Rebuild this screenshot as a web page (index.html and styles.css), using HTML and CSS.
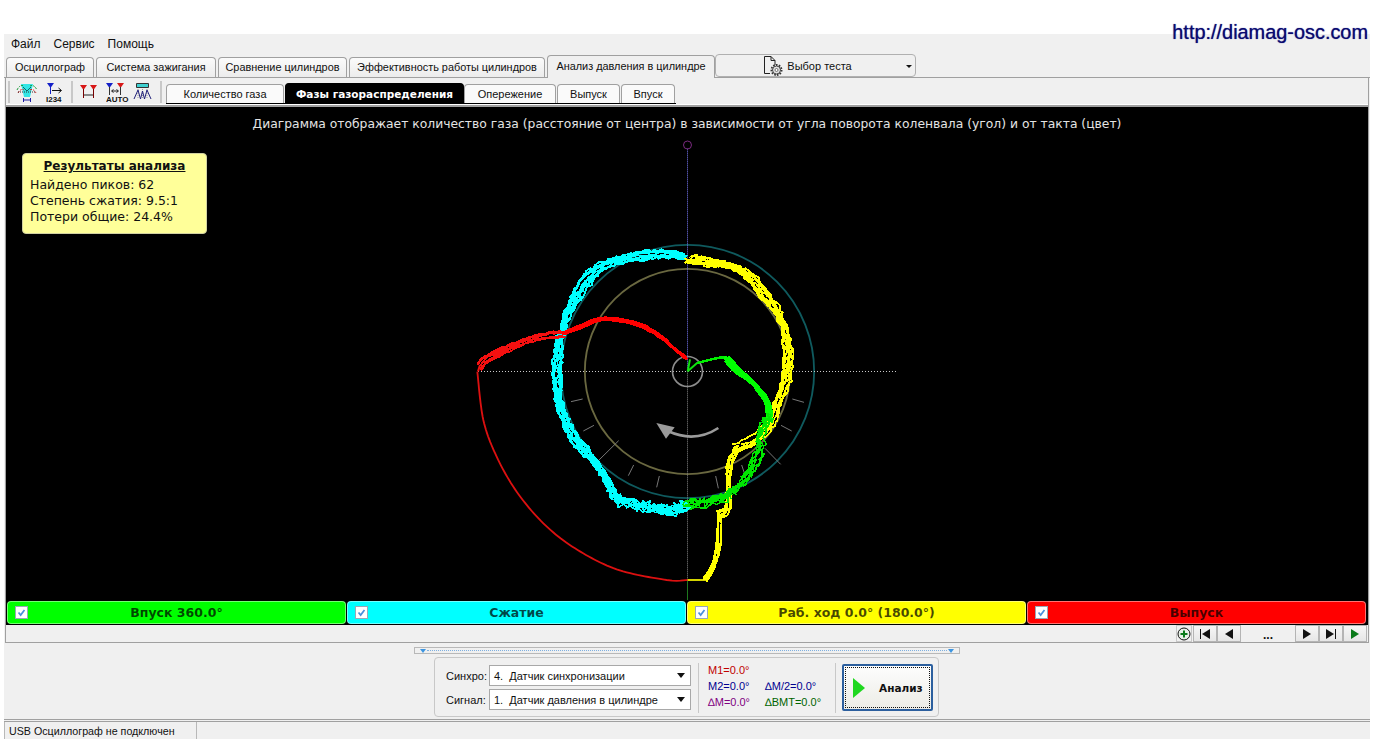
FILE: index.html
```html
<!DOCTYPE html>
<html lang="ru">
  <head>
    <meta charset="UTF-8" />
    <meta name="viewport" content="width=device-width, initial-scale=1.0" />
    <title>Анализ давления в цилиндре</title>
    <link rel="stylesheet" href="styles.css">
  </head>

  <body>
    <svg class="defs" width="0" height="0" aria-hidden="true">
      <symbol id="tick" viewBox="0 0 13 13">
        <path d="M3 6.5 L5.5 9.5 L10 3.5" fill="none" stroke="#4a8fdc" stroke-width="2" />
      </symbol>
    </svg>

    <header class="site-bar">
      <span class="site-url">http://diamag-osc.com</span>
    </header>

    <div class="app">
      <nav class="menu">
        <span>Файл</span>
        <span>Сервис</span>
        <span>Помощь</span>
      </nav>

      <div class="tabs">
        <div class="tab">Осциллограф</div>
        <div class="tab">Система зажигания</div>
        <div class="tab">Сравнение цилиндров</div>
        <div class="tab">Эффективность работы цилиндров</div>
        <div class="tab tab-active">Анализ давления в цилиндре</div>
        <div class="test-picker">
          <svg class="doc-icon" width="24" height="22" viewBox="0 0 24 22">
            <path d="M1.5 1.5 H8 L12 5.5 V10 M8 1.5 V5.5 H12 M1.5 1.5 V18.5 H7" fill="none" stroke="#222" />
            <circle cx="13.5" cy="15" r="5" fill="none" stroke="#333" stroke-width="2" stroke-dasharray="1.6 1.2" />
            <circle cx="13.5" cy="15" r="4" fill="#e2e2e2" stroke="#444" />
            <circle cx="13.5" cy="15" r="1.5" fill="#fff" stroke="#444" stroke-width=".7" />
          </svg>
          <span>Выбор теста</span>
          <i class="caret caret-small"></i>
        </div>
      </div>

      <div class="workspace">
        <div class="toolbar">
          <i class="tool-sep"></i>
          <svg class="tool" width="22" height="22" viewBox="0 0 22 22">
            <path d="M5 3 H17 L14 16 H8 Z" fill="#33e6e6" />
            <path d="M1 9 Q4 3 8 5 M14 5 Q18 3 21 9" fill="none" stroke="#1a9a3a" stroke-dasharray="2 1" />
            <path d="M2 12 Q5 7 8 9 M14 9 Q17 7 20 12" fill="none" stroke="#d02020" stroke-dasharray="2 1" />
            <path d="M2 11 H20" stroke="#333" stroke-dasharray="1 1" />
            <path d="M7 6 L11 10 L15 6" fill="none" stroke="#0a6a6a" />
            <path d="M7.5 17 V21 M14.5 17 V21 M8 19 H14" stroke="#1c1ca0" />
          </svg>
          <svg class="tool tool-b" width="20" height="22" viewBox="0 0 20 22">
            <path d="M3 2 H10 L6.5 7 Z" fill="#1420c8" />
            <path d="M6.5 6 V13" stroke="#1420c8" />
            <path d="M8 9.5 H17 M14.5 7 L17.5 9.5 L14.5 12" fill="none" stroke="#111" />
            <text x="2" y="21" class="tool-label">I234</text>
          </svg>
          <i class="tool-sep tool-sep-wide"></i>
          <svg class="tool" width="20" height="22" viewBox="0 0 20 22">
            <path d="M1 4 H8 L4.5 9 Z M11 4 H18 L14.5 9 Z" fill="#d81818" />
            <path d="M4.5 8 V17 M14.5 8 V17" stroke="#700" />
            <path d="M5 14 H14" stroke="#222" />
          </svg>
          <svg class="tool tool-c tool-wide" width="24" height="22" viewBox="0 0 24 22">
            <path d="M0 2 H7 L3.5 7 Z" fill="#1420c8" />
            <path d="M11 2 H18 L14.5 7 Z" fill="#d81818" />
            <path d="M3.5 6 V14 M14.5 6 V14" stroke="#333" />
            <path d="M6 10 H12 M7.5 8.5 L5.5 10 L7.5 11.5 M10.5 8.5 L12.5 10 L10.5 11.5" fill="none" stroke="#222" />
            <text x="0" y="21" class="tool-label">AUTO</text>
          </svg>
          <svg class="tool tool-c" width="20" height="22" viewBox="0 0 20 22">
            <path d="M3.5 2.5 H15.5 V6.5 H3.5 Z" fill="#3fd0d0" stroke="#333" />
            <path d="M5 8 V17 M9.5 8 V17 M14 8 V17" stroke="#999" stroke-dasharray="1 1" />
            <path d="M1 18 L5 9 L7.5 18 L9.5 10 L11.5 18 L14 9 L18 18" fill="none" stroke="#20207a" />
          </svg>
          <i class="tool-sep tool-sep-wide"></i>
          <div class="subtabs">
            <div class="subtab">Количество газа</div>
            <div class="subtab subtab-active">Фазы газораспределения</div>
            <div class="subtab">Опережение</div>
            <div class="subtab">Выпуск</div>
            <div class="subtab">Впуск</div>
          </div>
        </div>

        <section class="plot">
          <h2 class="plot-title">Диаграмма отображает количество газа (расстояние от центра) в зависимости от угла поворота коленвала (угол) и от такта (цвет)</h2>
          <svg class="plot-canvas" id="plotCanvas" viewBox="0 0 1363 493"></svg>
          <div class="results">
            <h3>Результаты анализа</h3>
            <p>Найдено пиков: 62</p>
            <p>Степень сжатия: 9.5:1</p>
            <p>Потери общие: 24.4%</p>
          </div>
        </section>

        <div class="strokes">
          <label class="stroke stroke-intake"><svg class="check"><use href="#tick" /></svg><span>Впуск 360.0°</span></label>
          <label class="stroke stroke-compress"><svg class="check"><use href="#tick" /></svg><span>Сжатие</span></label>
          <label class="stroke stroke-power"><svg class="check"><use href="#tick" /></svg><span>Раб. ход 0.0° (180.0°)</span></label>
          <label class="stroke stroke-exhaust"><svg class="check"><use href="#tick" /></svg><span>Выпуск</span></label>
        </div>

        <div class="pager">
          <button class="page-zoom" type="button">
            <svg width="14" height="14" viewBox="0 0 14 14">
              <circle cx="7" cy="7" r="6" fill="#e8f0e8" stroke="#111" />
              <path d="M7 3.5 V10.5 M3.5 7 H10.5" stroke="#0a7a1a" stroke-width="2" />
            </svg>
          </button>
          <button class="page-btn" type="button">
            <svg width="12" height="10" viewBox="0 0 12 10"><path d="M1.5 0 V10" stroke="#111" /><path d="M11 0 V10 L3 5 Z" fill="#111" /></svg>
          </button>
          <button class="page-btn" type="button">
            <svg width="10" height="10" viewBox="0 0 10 10"><path d="M9 0 V10 L1 5 Z" fill="#111" /></svg>
          </button>
          <div class="page-label">...</div>
          <button class="page-btn" type="button">
            <svg width="10" height="10" viewBox="0 0 10 10"><path d="M1 0 V10 L9 5 Z" fill="#111" /></svg>
          </button>
          <button class="page-btn" type="button">
            <svg width="12" height="10" viewBox="0 0 12 10"><path d="M1 0 V10 L9 5 Z" fill="#111" /><path d="M10.5 0 V10" stroke="#111" /></svg>
          </button>
          <button class="page-btn" type="button">
            <svg width="10" height="10" viewBox="0 0 10 10"><path d="M1 0 V10 L9 5 Z" fill="#0a7a1a" /></svg>
          </button>
        </div>
      </div>

      <div class="controls">
        <div class="splitter"><i></i><i></i></div>
        <div class="control-box">
          <div class="combos">
            <div class="combo-row">
              <span class="combo-label">Синхро:</span>
              <div class="combo"><span>4.&nbsp; Датчик синхронизации</span><i class="caret"></i></div>
            </div>
            <div class="combo-row">
              <span class="combo-label">Сигнал:</span>
              <div class="combo"><span>1.&nbsp; Датчик давления в цилиндре</span><i class="caret"></i></div>
            </div>
          </div>
          <i class="box-sep"></i>
          <div class="marks">
            <span class="mark-red">M1=0.0°</span>
            <span></span>
            <span class="mark-blue">M2=0.0°</span>
            <span class="mark-blue">∆M/2=0.0°</span>
            <span class="mark-purple">∆M=0.0°</span>
            <span class="mark-green">∆BMT=0.0°</span>
          </div>
          <i class="box-sep"></i>
          <button class="run" type="button">
            <svg width="12" height="20" viewBox="0 0 12 20"><path d="M0 0 L12 10 L0 20 Z" fill="#1fd81f" /></svg>
            <span>Анализ</span>
          </button>
        </div>
      </div>

      <footer class="status">
        <div class="status-cell status-main">USB Осциллограф не подключен</div>
        <div class="status-cell status-rest"></div>
      </footer>
    </div>

    <script src="chart.js"></script>
  </body>
</html>
```

FILE: styles.css
```css
* {
  padding: 0;
  margin: 0;
  box-sizing: border-box;
}

body {
  background-color: #ffffff;
  font-family: "Liberation Sans", Arial, sans-serif;
  font-size: 11px;
  color: #111111;
  overflow: hidden;
}

.defs {
  position: absolute;
}

.site-bar {
  height: 34px;
  display: flex;
  justify-content: flex-end;
  padding: 20px 14px 0 0;
}

.site-url {
  font-size: 19.9px;
  line-height: 24px;
  color: #0a0a6e;
  text-shadow: 0 0 1px #3a3a9e;
}

.app {
  width: 1366px;
  height: 705px;
  margin-left: 4px;
  display: flex;
  flex-direction: column;
  background-color: #f0f0f0;
}

/* menu + main tabs */
.menu {
  height: 20px;
  display: flex;
  gap: 13px;
  align-items: center;
  padding: 0 0 0 7px;
  font-size: 12px;
}

.tabs {
  height: 24px;
  display: grid;
  grid-template-columns: 90px 122px 131px 198px 168px 201px;
  padding-left: 2px;
  border-bottom: 1px solid #a0a0a0;
  align-items: end;
}

.tab {
  height: 20px;
  margin-right: 2px;
  padding-bottom: 1px;
  display: flex;
  align-items: center;
  justify-content: center;
  background: linear-gradient(#fbfbfb, #ececec);
  border: 1px solid #a0a0a0;
  border-bottom: none;
  border-radius: 4px 4px 0 0;
  font-size: 10.9px;
}

.tab-active {
  height: 23px;
  margin-right: 0;
  margin-bottom: -1px;
  padding-bottom: 2px;
  background: #f0f0f0;
}

.test-picker {
  height: 23px;
  display: flex;
  align-items: center;
  justify-content: center;
  position: relative;
  background: #f0f0f0;
  border: 1px solid #b0b0b0;
  border-radius: 4px;
}

.doc-icon {
  margin-left: -16px;
}

.caret {
  width: 0;
  height: 0;
  border-left: 4px solid transparent;
  border-right: 4px solid transparent;
  border-top: 5px solid #111111;
}

.caret-small {
  position: absolute;
  right: 3px;
  top: 10px;
  border-width: 3px 3px 0;
}

/* workspace */
.workspace {
  flex: 1;
  margin: 0 1px;
  display: flex;
  flex-direction: column;
  border-left: 1px solid #a0a0a0;
  border-right: 1px solid #a0a0a0;
  border-bottom: 1px solid #a0a0a0;
}

.toolbar {
  height: 29px;
  flex: none;
  display: flex;
  align-items: flex-start;
  padding: 3px 0 0 2px;
  border-bottom: 2px solid #a0a0a0;
  box-shadow: inset 0 -1px 0 #ffffff;
}

.tool-label {
  font-family: "Liberation Sans", Arial, sans-serif;
  font-size: 8px;
  font-weight: 700;
  fill: #111111;
}

.tool-sep {
  width: 2px;
  height: 22px;
  margin-right: 6px;
  background-color: #c8c8c8;
}

.tool-sep-wide {
  margin: 0 6px 0 7px;
}

.tool-sep-wide:last-of-type {
  margin-right: 4px;
}

.tool-b {
  margin-left: 6px;
}

.tool-c {
  margin-left: 7px;
}

.tool-wide {
  margin-right: -4px;
}

.subtabs {
  display: flex;
  align-items: flex-end;
  height: 23px;
  border-bottom: 1px solid #000000;
}

.subtab {
  height: 19px;
  display: flex;
  align-items: center;
  justify-content: center;
  background: #fafafa;
  border: 1px solid #a0a0a0;
  border-bottom: none;
  border-radius: 4px 4px 0 0;
  margin-right: 1px;
}

.subtab:nth-child(1) { width: 118px; }
.subtab:nth-child(2) { width: 179px; }
.subtab:nth-child(3) { width: 92px; }
.subtab:nth-child(4) { width: 63px; }
.subtab:nth-child(5) { width: 54px; }

.subtab-active {
  height: 20px;
  margin-right: 0;
  background: #000000;
  border-color: #000000;
  color: #ffffff;
  font-family: "DejaVu Sans", Verdana, sans-serif;
  font-weight: 700;
  font-size: 10.5px;
  white-space: nowrap;
}

/* black chart area */
.plot {
  height: 493px;
  flex: none;
  position: relative;
  background-color: #000000;
}

.plot-title {
  padding-top: 9px;
  text-align: center;
  font-family: "DejaVu Sans", Verdana, sans-serif;
  font-size: 12.33px;
  font-weight: 400;
  line-height: 16px;
  color: #e4e4e4;
}

.plot-canvas {
  position: absolute;
  left: 0;
  top: 0;
  width: 1363px;
  height: 493px;
}

.results {
  position: absolute;
  left: 16px;
  top: 46px;
  width: 185px;
  height: 81px;
  padding: 4px 7px;
  background-color: #ffff99;
  border: 1px solid #d0d0a0;
  border-radius: 4px;
  color: #111111;
  font-family: "DejaVu Sans", Verdana, sans-serif;
  font-size: 12.5px;
  line-height: 16px;
}

.results h3 {
  margin-bottom: 3px;
  text-align: center;
  font-size: 12px;
  font-weight: 700;
  text-decoration: underline;
}

.strokes {
  height: 25px;
  flex: none;
  display: grid;
  grid-template-columns: repeat(4, 339px);
  gap: 1px;
  padding: 1px 1px;
  background-color: #000000;
}

.stroke {
  position: relative;
  display: flex;
  align-items: center;
  justify-content: center;
  border: 1px solid rgba(255, 255, 255, 0.45);
  border-radius: 4px;
  font-family: "DejaVu Sans", Verdana, sans-serif;
  font-weight: 700;
  font-size: 12.5px;
  color: rgba(0, 0, 0, 0.72);
}

.stroke-intake { background-color: #00ff00; }
.stroke-compress { background-color: #00ffff; }
.stroke-power { background-color: #ffff00; }
.stroke-exhaust { background-color: #ff0000; }

.check {
  position: absolute;
  left: 7px;
  top: 4px;
  width: 13px;
  height: 13px;
  background-color: #ffffff;
  border: 1px solid #9aa8b8;
}

.pager {
  flex: 1;
  display: flex;
  justify-content: flex-end;
  padding-right: 1px;
}

.pager button {
  display: flex;
  align-items: center;
  justify-content: center;
  font: inherit;
}

.page-zoom {
  width: 16px;
  background: #f0f0f0;
  border: 1px solid #c8c8c8;
  margin-right: 1px;
}

.page-btn {
  width: 24px;
  background: linear-gradient(#f6f6f6, #e6e6e6);
  border: 1px solid #b4b4b4;
}

.page-label {
  width: 54px;
  padding-top: 3px;
  text-align: center;
  font-weight: 700;
  font-size: 12px;
}

/* bottom controls */
.controls {
  height: 79px;
  flex: none;
  display: flex;
  flex-direction: column;
  align-items: center;
  border-bottom: 3px double #a0a0a0;
}

.splitter {
  width: 546px;
  height: 7px;
  margin-top: 4px;
  display: flex;
  justify-content: space-between;
  padding: 1px 5px 0;
  border: 1px solid #b8b8b8;
  position: relative;
}

.splitter::after {
  content: "";
  position: absolute;
  left: 12px;
  right: 12px;
  top: 2px;
  border-top: 1px dotted #7fb0e0;
}

.splitter i {
  width: 0;
  height: 0;
  border-left: 3px solid transparent;
  border-right: 3px solid transparent;
  border-top: 4px solid #3d95e0;
}

.control-box {
  width: 505px;
  height: 60px;
  margin: 3px 1px 0 0;
  display: flex;
  align-items: center;
  padding: 1px 5px 0 11px;
  border: 1px solid #c8c8c8;
  border-radius: 4px;
}

.combos {
  display: flex;
  flex-direction: column;
  gap: 3px;
}

.combo-row {
  display: flex;
  align-items: center;
}

.combo-label {
  width: 43px;
}

.combo {
  width: 202px;
  height: 21px;
  display: flex;
  align-items: center;
  justify-content: space-between;
  padding: 0 5px 0 4px;
  background-color: #ffffff;
  border: 1px solid #a8a8a8;
  font-size: 11px;
}

.box-sep {
  width: 1px;
  height: 50px;
  background-color: #c8c8c8;
}

.combos + .box-sep {
  margin: 0 9px 0 7px;
}

.marks {
  width: 127px;
  margin-top: -4px;
  display: grid;
  grid-template-columns: 57px 1fr;
  grid-auto-rows: 16px;
  align-items: center;
  font-size: 11px;
}

.mark-red { color: #c00000; }
.mark-blue { color: #000090; }
.mark-purple { color: #800080; }
.mark-green { color: #006400; }

.marks + .box-sep {
  margin-right: 6px;
}

.run {
  width: 91px;
  height: 47px;
  display: flex;
  align-items: center;
  padding-left: 9px;
  gap: 14px;
  background: linear-gradient(#fdfdfd, #ecece6);
  border: 2px solid #2c5f9e;
  border-radius: 2px;
  outline: 1px dotted #111111;
  outline-offset: -4px;
  font-family: "DejaVu Sans", Verdana, sans-serif;
  font-weight: 700;
  font-size: 10.5px;
  color: #111111;
}

.status {
  flex: 1;
  display: flex;
  gap: 3px;
}

.status-cell {
  display: flex;
  align-items: center;
  padding-left: 4px;
  background-color: #f0f0f0;
  border-left: 1px solid #b8b8b8;
  font-size: 10.7px;
}

.status-main {
  width: 189px;
  white-space: nowrap;
}

.status-rest {
  flex: 1;
}
```

FILE: chart.js
```js
// Polar plot of the pressure trace. All points are in plot units (1 unit = 1/3 px),
// group below moves them onto the black area.
const SVG_NS = "http://www.w3.org/2000/svg";
const canvas = document.getElementById("plotCanvas");
const layer = document.createElementNS(SVG_NS, "g");
layer.setAttribute("transform", "translate(454 123) scale(0.33333)");
canvas.appendChild(layer);

let seed = 4711;
function rnd() {
  seed = (seed * 1664525 + 1013904223) % 4294967296;
  return seed / 4294967296 - 0.5;
}

function add(tag, attrs) {
  const el = document.createElementNS(SVG_NS, tag);
  Object.keys(attrs).forEach((key) => el.setAttribute(key, attrs[key]));
  layer.appendChild(el);
  return el;
}

function line(x1, y1, x2, y2, stroke, width, dash) {
  const el = add("line", { x1, y1, x2, y2, stroke, "stroke-width": width || 3 });
  if (dash) el.setAttribute("stroke-dasharray", dash);
}

// Catmull-Rom through the control points
function smooth(pts, step) {
  const out = [];
  for (let i = 0; i < pts.length - 1; i++) {
    const p0 = pts[Math.max(i - 1, 0)];
    const p1 = pts[i];
    const p2 = pts[i + 1];
    const p3 = pts[Math.min(i + 2, pts.length - 1)];
    const n = Math.max(2, Math.round(Math.hypot(p2[0] - p1[0], p2[1] - p1[1]) / step));
    for (let j = 0; j < n; j++) {
      const t = j / n;
      const f = (a, b, c, d) =>
        0.5 * (2 * b + (c - a) * t + (2 * a - 5 * b + 4 * c - d) * t * t + (3 * b - a - 3 * c + d) * t * t * t);
      out.push([f(p0[0], p1[0], p2[0], p3[0]), f(p0[1], p1[1], p2[1], p3[1])]);
    }
  }
  out.push(pts[pts.length - 1]);
  return out;
}

// each pass is one engine cycle: a slow wander plus sampling noise
function trace(pts, color, opts) {
  const step = opts.step || 10;
  const base = smooth(pts, step);
  for (let pass = 0; pass < opts.passes; pass++) {
    const phaseX = rnd() * 12;
    const phaseY = rnd() * 12;
    const freq = 0.006 + (rnd() + 0.5) * 0.012;
    const d = base
      .map((p, i) => {
        const s = i * step * freq;
        const x = p[0] + (opts.spread / 2) * Math.sin(s + phaseX) + rnd() * opts.jitter;
        const y = p[1] + (opts.spread / 2) * Math.sin(s + phaseY) + rnd() * opts.jitter;
        return x.toFixed(1) + " " + y.toFixed(1);
      })
      .join(" L");
    add("path", {
      d: "M" + d,
      fill: "none",
      stroke: color,
      "stroke-width": opts.width,
      "stroke-linejoin": "round",
      "shape-rendering": opts.smooth ? "auto" : "crispEdges",
    });
  }
}

// reference circles and cross
add("circle", { cx: 682.5, cy: 424.5, r: 380, fill: "none", stroke: "#0f5a5e", "stroke-width": 5.5 });
add("circle", { cx: 682.5, cy: 424.5, r: 308, fill: "none", stroke: "#6a6840", "stroke-width": 5.5 });

[
  [333, 515, 368, 507], [370, 603, 402, 586], [412, 695, 476, 632], [505, 737, 521, 705], [590, 772, 598, 738],
  [775, 775, 767, 738], [855, 735, 845, 705], [962, 703, 915, 655], [995, 603, 963, 586], [1032, 517, 997, 507],
].forEach((t) => line(t[0], t[1], t[2], t[3], "#777777", 3));

line(682.5, -244, 682.5, 424, "#7c7cff", 3, "3 3");
line(682.5, 424, 682.5, 1052, "#8a8a8a", 3, "3 3");
line(682.5, 1052, 682.5, 1110, "#1f7a1f", 3);
line(54, 424.5, 1308, 424.5, "#d0d0d0", 3, "3 6");
add("circle", { cx: 682.5, cy: -255, r: 12, fill: "none", stroke: "#7a2a80", "stroke-width": 3 });
add("circle", { cx: 682.5, cy: 424.5, r: 45, fill: "none", stroke: "#8c8c8c", "stroke-width": 5 });

// turn direction arrow
add("path", { d: "M775 594 Q705 640 625 604", fill: "none", stroke: "#9a9a9a", "stroke-width": 8 });
add("path", { d: "M589 579 L644 592 L618 626 Z", fill: "#9a9a9a" });

// exhaust
trace([[683, 1050], [620, 1050], [470, 1018], [345, 955], [250, 880], [170, 785], [110, 680], [70, 570], [52, 425]],
  "#dc1010", { passes: 1, jitter: 0, spread: 0, width: 5.5, smooth: true });

// compression
trace([[683, 84], [620, 72], [540, 78], [450, 98], [400, 130], [360, 180], [322, 260], [298, 340], [292, 430], [300, 510], [332, 600], [380, 670], [422, 730], [470, 812]],
  "#00ffff", { passes: 9, jitter: 11, spread: 22, width: 5.5 });
trace([[470, 812], [540, 826], [620, 840], [683, 825]], "#00ffff", { passes: 8, jitter: 26, spread: 16, width: 5, step: 9 });

// power stroke
trace([[683, 84], [760, 100], [850, 128], [900, 180], [950, 250], [980, 340], [982, 430], [960, 510], [925, 590], [880, 630], [830, 652]],
  "#ffff00", { passes: 9, jitter: 10, spread: 24, width: 5.5 });
trace([[830, 652], [808, 700], [808, 790], [800, 840], [778, 852]], "#ffff00", { passes: 6, jitter: 5, spread: 16, width: 5.5 });
trace([[778, 852], [775, 950], [760, 1010], [735, 1048]], "#ffff00", { passes: 6, jitter: 3, spread: 12, width: 5.5 });
line(683, 1050, 740, 1050, "#ffff00", 5);

// intake
trace([[683, 424], [690, 388]], "#10e010", { passes: 1, jitter: 0, spread: 0, width: 6, smooth: true });
trace([[683, 424], [712, 398]], "#10e010", { passes: 1, jitter: 0, spread: 0, width: 6, smooth: true });
trace([[712, 398], [770, 385], [800, 385], [830, 420]], "#00ee00", { passes: 3, jitter: 1, spread: 3, width: 7 });
trace([[800, 385], [830, 420], [880, 460], [920, 510], [930, 560]], "#00ff00", { passes: 7, jitter: 2, spread: 12, width: 9 });
trace([[930, 560], [905, 600], [900, 670], [860, 750], [810, 800]], "#00e600", { passes: 6, jitter: 14, spread: 22, width: 4.5, step: 8 });
trace([[810, 800], [750, 815], [683, 825]], "#00e600", { passes: 7, jitter: 24, spread: 12, width: 4.5, step: 8 });

// exhaust, on top of the rest
trace([[58, 414], [70, 394], [130, 362], [230, 325], [310, 310]], "#f41010", { passes: 7, jitter: 4, spread: 16, width: 5 });
line(54, 424, 60, 405, "#f41010", 6);
trace([[310, 310], [360, 290], [420, 268], [480, 270], [540, 285], [600, 320], [640, 355], [678, 385]],
  "#ff0000", { passes: 6, jitter: 2, spread: 7, width: 7 });
```
